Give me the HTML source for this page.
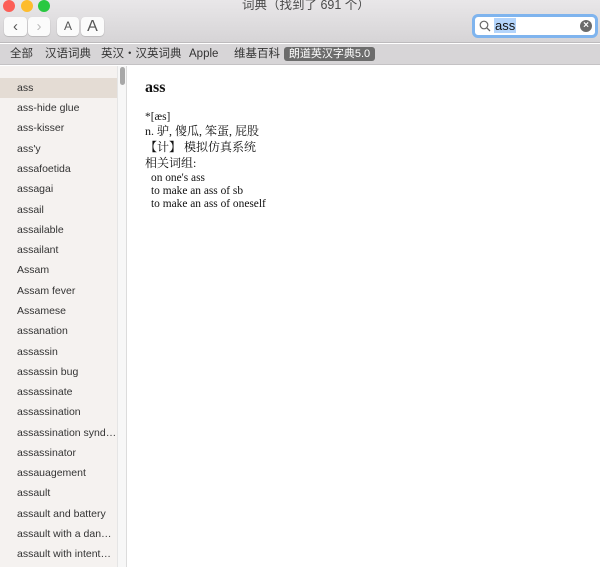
<!DOCTYPE html>
<html><head><meta charset="utf-8"><style>
*{margin:0;padding:0;box-sizing:border-box}
body{width:600px;height:567px;overflow:hidden;font-family:"Liberation Sans","Noto Sans CJK SC",sans-serif;background:#fff;position:relative}
.tb{position:absolute;left:0;top:0;width:600px;height:43px;background:linear-gradient(#e9e7e9,#d6d4d6);border-bottom:1px solid #bdbbbd}
.dot{position:absolute;top:0;width:12px;height:12px;border-radius:50%}
.btn{position:absolute;top:17px;height:19px;background:#fbfbfb;border-radius:4px;box-shadow:0 0.5px 1px rgba(0,0,0,.25);font-size:14px;color:#555;text-align:center;line-height:19px}
.search{position:absolute;left:472px;top:14px;width:126px;height:24px;border:3px solid #7fb4ee;border-radius:6px;background:#fff}
.tabs{position:absolute;left:0;top:44px;width:600px;height:21px;background:#d7d5d7;border-bottom:1px solid #c4c2c4;font-size:11.5px;color:#333}
.tabs span{position:absolute;top:3px;line-height:15px;white-space:nowrap}
.side{position:absolute;left:0;top:66px;width:117px;height:501px;background:#f5f2f0}
.sb{position:absolute;left:117px;top:66px;width:10px;height:501px;background:#f7f7f7;border-left:1px solid #e5e5e5;border-right:1px solid #dcdcdc}
.row{position:absolute;left:0;width:117px;height:20px;font-size:10.5px;color:#333;line-height:20px;padding-left:17px;white-space:nowrap}
.c{position:absolute;left:145px;font-family:"Liberation Serif","Noto Serif CJK SC",serif;font-size:12px;color:#111;line-height:14px;white-space:nowrap}
.e{font-size:11.4px}
</style></head><body>
<div class="tb">
<div class="dot" style="left:3px;background:#fc5f57"></div>
<div class="dot" style="left:21px;background:#fdbc2e"></div>
<div class="dot" style="left:38px;background:#29c840"></div>
<div style="position:absolute;left:242px;top:-1px;font-size:12.5px;color:#4a4a4a;line-height:12px">词典（找到了 691 个）</div>
<div class="btn" style="left:4px;width:23px;font-size:15px">&#8249;</div>
<div class="btn" style="left:28px;width:22px;color:#bbb;font-size:15px">&#8250;</div>
<div class="btn" style="left:57px;width:22px;font-size:12px">A</div>
<div class="btn" style="left:81px;width:23px;font-size:16px">A</div>
<div class="search">
<svg style="position:absolute;left:4px;top:3px" width="13" height="13" viewBox="0 0 13 13"><circle cx="5" cy="5" r="3.8" fill="none" stroke="#666" stroke-width="1.2"/><line x1="7.8" y1="7.8" x2="11" y2="11" stroke="#666" stroke-width="1.3"/></svg>
<span style="position:absolute;left:19px;top:1px;background:#b3d4fb;font-size:13px;line-height:15px;color:#111;padding:0 1px">ass</span>
<div style="position:absolute;right:3px;top:3px;width:12px;height:12px;border-radius:50%;background:#6b6b6b;color:#fff;font-size:10px;line-height:12px;text-align:center;font-weight:bold">×</div>
</div>
</div>
<div class="tabs">
<span style="left:10px">全部</span>
<span style="left:45px">汉语词典</span>
<span style="left:101px">英汉・汉英词典</span>
<span style="left:189px">Apple</span>
<span style="left:234px">维基百科</span>
<span style="left:284px;top:3px;background:#6c6c6c;color:#fff;border-radius:3px;width:91px;height:14px;line-height:14px;font-size:11px;text-align:center">朗道英汉字典5.0</span>
</div>
<div class="side">
<div class="row" style="top:12px;background:#e4dcd4">ass</div>
<div class="row" style="top:32px">ass-hide glue</div>
<div class="row" style="top:52px">ass-kisser</div>
<div class="row" style="top:73px">ass'y</div>
<div class="row" style="top:93px">assafoetida</div>
<div class="row" style="top:113px">assagai</div>
<div class="row" style="top:134px">assail</div>
<div class="row" style="top:154px">assailable</div>
<div class="row" style="top:174px">assailant</div>
<div class="row" style="top:194px">Assam</div>
<div class="row" style="top:215px">Assam fever</div>
<div class="row" style="top:235px">Assamese</div>
<div class="row" style="top:255px">assanation</div>
<div class="row" style="top:276px">assassin</div>
<div class="row" style="top:296px">assassin bug</div>
<div class="row" style="top:316px">assassinate</div>
<div class="row" style="top:336px">assassination</div>
<div class="row" style="top:357px">assassination synd…</div>
<div class="row" style="top:377px">assassinator</div>
<div class="row" style="top:397px">assauagement</div>
<div class="row" style="top:417px">assault</div>
<div class="row" style="top:438px">assault and battery</div>
<div class="row" style="top:458px">assault with a dan…</div>
<div class="row" style="top:478px">assault with intent…</div>
</div>
<div class="sb"><div style="position:absolute;left:2px;top:1px;width:5px;height:18px;border-radius:3px;background:#a8a8a8"></div></div>
<div class="c" style="top:79px;font-family:'Liberation Serif',serif;font-size:16px;font-weight:bold;line-height:18px">ass</div>
<div class="c e" style="top:110px">*[æs]</div>
<div class="c" style="top:124px">n. 驴, 傻瓜, 笨蛋, 屁股</div>
<div class="c" style="top:140px">【计】 模拟仿真系统</div>
<div class="c" style="top:156px">相关词组:</div>
<div class="c e" style="top:171px;left:151px">on one's ass</div>
<div class="c e" style="top:184px;left:151px">to make an ass of sb</div>
<div class="c e" style="top:197px;left:151px">to make an ass of oneself</div>
</body></html>
